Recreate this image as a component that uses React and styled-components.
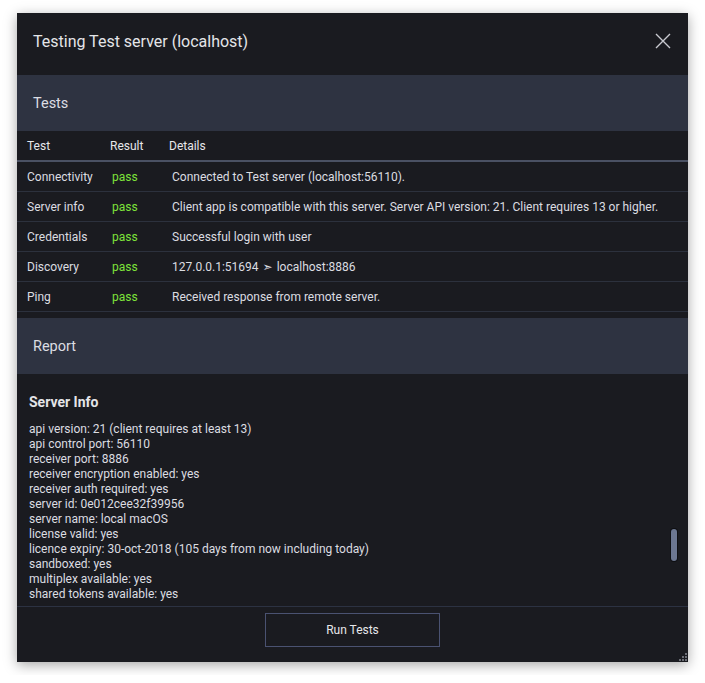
import React from 'react';
import styled, { createGlobalStyle } from 'styled-components';

const GlobalStyle = createGlobalStyle`
  html, body {
    margin: 0;
    padding: 0;
    background: #ffffff;
  }
  body {
    font-family: Roboto, "Liberation Sans", Arial, sans-serif;
  }
`;

const Page = styled.div`
  padding: 13px 17px;
  width: 671px;
`;

const Dialog = styled.div`
  position: relative;
  width: 671px;
  height: 649px;
  background: #1a1b20;
  box-shadow: 0 3px 12px rgba(0, 0, 0, 0.35);
  display: flex;
  flex-direction: column;
  color: #dcdde0;
`;

const Header = styled.div`
  height: 62px;
  flex-shrink: 0;
  display: flex;
  align-items: center;
  justify-content: space-between;
  padding: 0 14px 0 16px;
`;

const Title = styled.h1`
  margin: 0;
  font-size: 16px;
  font-weight: 400;
  color: #e4e5e8;
  margin-top: -6px;
`;

const CloseButton = styled.button`
  width: 22px;
  height: 22px;
  border: 0;
  padding: 0;
  background: none;
  color: #c9cad0;
  display: flex;
  align-items: center;
  justify-content: center;
  margin-top: -6px;
  cursor: pointer;
`;

const SectionHeader = styled.div`
  height: 56px;
  flex-shrink: 0;
  display: flex;
  align-items: center;
  padding-left: 16px;
  background: #2e3341;
  font-size: 14.5px;
  color: #dcdde2;
`;

const Table = styled.div`
  padding-bottom: 6px;
  flex-shrink: 0;
`;

const HeadRow = styled.div`
  display: grid;
  grid-template-columns: 83px 59px 1fr;
  height: 29px;
  align-items: center;
  border-bottom: 2px solid #4a5163;
  font-size: 12px;
  color: #e6e7ea;
`;

const Row = styled.div`
  display: grid;
  grid-template-columns: 83px 59px 1fr;
  height: 29px;
  align-items: center;
  border-bottom: 1px solid #2c313d;
  font-size: 12px;
  color: #dcdde1;
`;

const Cell = styled.div`
  padding-left: ${p => p.$indent || 10}px;
  padding-top: 1px;
  white-space: nowrap;
  color: ${p => (p.$pass ? '#7ee43a' : 'inherit')};
`;

const Arrow = styled.span`
  font-family: "DejaVu Sans", sans-serif;
  font-size: 12px;
  margin: 0 4px;
`;

const ReportBody = styled.div`
  position: relative;
  flex: 1;
  padding: 19px 12px 0;
  overflow: hidden;
  border-bottom: 1px solid #2c3242;
`;

const ReportTitle = styled.h3`
  margin: 0 0 11px;
  font-size: 14px;
  font-weight: 700;
  color: #e4e5e8;
  line-height: 18px;
`;

const InfoLine = styled.div`
  font-size: 12px;
  line-height: 15px;
  color: #dcdde1;
`;

const ScrollThumb = styled.div`
  position: absolute;
  right: 11px;
  top: 155px;
  width: 6px;
  height: 32px;
  border-radius: 3px;
  background: #6c7791;
  box-shadow: 0 0 0 1px #0e0f12;
`;

const Footer = styled.div`
  height: 55px;
  flex-shrink: 0;
  display: flex;
  justify-content: center;
  padding-top: 6px;
  box-sizing: border-box;
`;

const RunButton = styled.button`
  width: 175px;
  height: 34px;
  background: #1a1b20;
  border: 1px solid #4a5271;
  color: #e6e7ea;
  font-family: Roboto, "Liberation Sans", Arial, sans-serif;
  font-size: 12px;
  cursor: pointer;
`;

const Grip = styled.svg`
  position: absolute;
  right: 1px;
  bottom: 1px;
`;

const tests = [
  { name: 'Connectivity', detail: 'Connected to Test server (localhost:56110).' },
  {
    name: 'Server info',
    detail: 'Client app is compatible with this server. Server API version: 21. Client requires 13 or higher.',
  },
  { name: 'Credentials', detail: 'Successful login with user' },
  { name: 'Discovery', detail: null },
  { name: 'Ping', detail: 'Received response from remote server.' },
];

const info = [
  'api version: 21 (client requires at least 13)',
  'api control port: 56110',
  'receiver port: 8886',
  'receiver encryption enabled: yes',
  'receiver auth required: yes',
  'server id: 0e012cee32f39956',
  'server name: local macOS',
  'license valid: yes',
  'licence expiry: 30-oct-2018 (105 days from now including today)',
  'sandboxed: yes',
  'multiplex available: yes',
  'shared tokens available: yes',
];

const App = () => {
  return (
    <Page>
      <GlobalStyle />
      <Dialog>
        <Header>
          <Title>Testing Test server (localhost)</Title>
          <CloseButton aria-label="Close">
            <svg width="16" height="16" viewBox="0 0 16 16">
              <path d="M1 1L15 15M15 1L1 15" stroke="currentColor" strokeWidth="1.4" fill="none" />
            </svg>
          </CloseButton>
        </Header>

        <SectionHeader>Tests</SectionHeader>
        <Table>
          <HeadRow>
            <Cell>Test</Cell>
            <Cell>Result</Cell>
            <Cell>Details</Cell>
          </HeadRow>
          {tests.map(t => (
            <Row key={t.name}>
              <Cell>{t.name}</Cell>
              <Cell $indent={12} $pass>pass</Cell>
              <Cell $indent={13}>
                {t.detail || (
                  <>
                    127.0.0.1:51694<Arrow>➣</Arrow>localhost:8886
                  </>
                )}
              </Cell>
            </Row>
          ))}
        </Table>

        <SectionHeader>Report</SectionHeader>
        <ReportBody>
          <ReportTitle>Server Info</ReportTitle>
          {info.map(line => (
            <InfoLine key={line}>{line}</InfoLine>
          ))}
          <ScrollThumb />
        </ReportBody>

        <Footer>
          <RunButton>Run Tests</RunButton>
        </Footer>

        <Grip width="10" height="10" viewBox="0 0 10 10">
          {[[8, 0], [8, 3], [5, 3], [8, 6], [5, 6], [2, 6]].map(([x, y]) => (
            <rect key={`${x}-${y}`} x={x} y={y + 2} width="2" height="2" fill="#6b6d75" />
          ))}
        </Grip>
      </Dialog>
    </Page>
  );
};

export default App;
